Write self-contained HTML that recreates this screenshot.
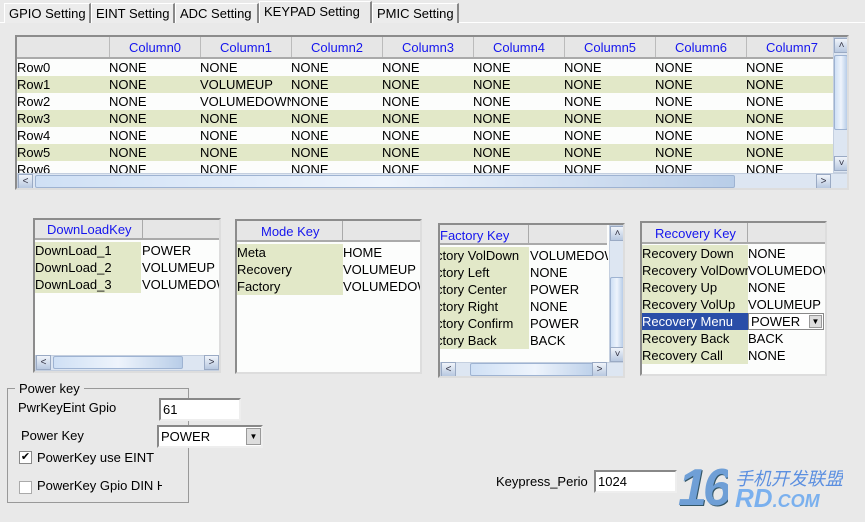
<!DOCTYPE html>
<html><head><meta charset="utf-8"><style>
*{margin:0;padding:0;box-sizing:border-box}
body{width:865px;height:522px;overflow:hidden;background:#e9e9e9;font-family:"Liberation Sans",Arial,sans-serif;font-size:13px;color:#000;position:relative}
.a{position:absolute;white-space:nowrap;overflow:hidden}
.tab{position:absolute;top:3px;height:20px;background:#ececec;border:1px solid #fff;border-right:2px solid #888;border-bottom:none;padding:2px 0 0 4px;font-size:13px;white-space:nowrap;overflow:hidden}
.box{position:absolute;background:#fcfdfc;border:2px solid #8c8c8c;border-right-color:#ddd;border-bottom-color:#ddd;overflow:hidden}
.hd{position:absolute;left:0;right:0;top:0;background:#e6e6e6;border-bottom:2px solid #aaa}
.blue{color:#1515ee}
.hl{background:#e2e8c8}
.sb{position:absolute;background:#dde6f2;border:1px solid #c4cfdf}
.btn{position:absolute;width:15px;height:15px;background:linear-gradient(#f0f4fa,#b8c8e0);border:1px solid #9aaac4;font-size:10px;text-align:center;line-height:13px;color:#334}
.thumb{position:absolute;background:linear-gradient(90deg,#cfe0f5,#eef4fc,#b8cde8);border:1px solid #9eb3d2;border-radius:2px}
.inp{position:absolute;background:#fff;border:2px solid #888;border-right-color:#eee;border-bottom-color:#eee;padding-left:2px;font-size:13px}
</style></head><body>
<div class="a" style="left:0;top:22px;width:865px;height:1px;background:#fff"></div>
<div class="tab" style="left:4px;width:87px">GPIO Setting</div>
<div class="tab" style="left:91px;width:84px">EINT Setting</div>
<div class="tab" style="left:175px;width:84px">ADC Setting</div>
<div class="tab" style="left:259px;top:1px;height:22px;width:113px;background:#e9e9e9">KEYPAD Setting</div>
<div class="tab" style="left:372px;width:87px">PMIC Setting</div>

<div class="box" style="left:15px;top:35px;width:834px;height:155px">
 <div class="hd" style="height:22px"></div>
 <div id="grid"></div>
 <div class="sb" style="left:816px;top:0;width:16px;height:136px"></div>
 <div class="btn" style="left:817px;top:1px">&#708;</div>
 <div class="thumb" style="left:817px;top:18px;width:14px;height:75px"></div>
 <div class="btn" style="left:817px;top:119px">&#709;</div>
 <div class="sb" style="left:0;top:136px;width:832px;height:17px"></div>
 <div class="btn" style="left:1px;top:137px">&lt;</div>
 <div class="thumb" style="left:18px;top:138px;width:700px;height:13px"></div>
 <div class="btn" style="left:799px;top:137px">&gt;</div>
</div>

<div class="box" style="left:33px;top:218px;width:188px;height:155px">
 <div class="hd" style="height:20px;width:108px;border-right:1px solid #aaa;right:auto"></div><div class="hd" style="height:20px;left:108px"></div>
 <div class="a blue" style="left:12px;top:2px">DownLoadKey</div>
 <div class="a hl" style="left:0;top:22px;width:106px;height:51px"></div>
 <div class="a" style="left:0;top:22px;line-height:17px">DownLoad_1<br>DownLoad_2<br>DownLoad_3</div>
 <div class="a" style="left:107px;top:22px;line-height:17px;width:79px">POWER<br>VOLUMEUP<br>VOLUMEDOWN</div>
 <div class="sb" style="left:0;top:135px;width:186px;height:16px"></div>
 <div class="btn" style="left:1px;top:135px">&lt;</div>
 <div class="thumb" style="left:18px;top:136px;width:130px;height:13px"></div>
 <div class="btn" style="left:169px;top:135px">&gt;</div>
</div>

<div class="box" style="left:235px;top:219px;width:187px;height:155px">
 <div class="hd" style="height:21px;width:106px;border-right:1px solid #aaa;right:auto"></div><div class="hd" style="height:21px;left:106px"></div>
 <div class="a blue" style="left:24px;top:3px">Mode Key</div>
 <div class="a hl" style="left:0;top:23px;width:106px;height:51px"></div>
 <div class="a" style="left:0;top:23px;line-height:17px">Meta<br>Recovery<br>Factory</div>
 <div class="a" style="left:106px;top:23px;line-height:17px;width:79px">HOME<br>VOLUMEUP<br>VOLUMEDOWN</div>
</div>

<div class="box" style="left:438px;top:223px;width:187px;height:155px">
 <div class="hd" style="height:20px;width:89px;border-right:1px solid #aaa;right:auto"></div><div class="hd" style="height:20px;left:89px;right:16px"></div>
 <div class="a blue" style="left:0;top:3px">Factory Key</div>
 <div class="a hl" style="left:0;top:22px;width:89px;height:102px"></div>
 <div class="a" style="left:-4px;top:22px;line-height:17px;width:93px">ctory VolDown<br>ctory Left<br>ctory Center<br>ctory Right<br>ctory Confirm<br>ctory Back</div>
 <div class="a" style="left:90px;top:22px;line-height:17px;width:78px">VOLUMEDOWN<br>NONE<br>POWER<br>NONE<br>POWER<br>BACK</div>
 <div class="sb" style="left:169px;top:0;width:16px;height:138px"></div>
 <div class="btn" style="left:170px;top:1px">&#708;</div>
 <div class="thumb" style="left:170px;top:52px;width:14px;height:80px"></div>
 <div class="btn" style="left:170px;top:122px">&#709;</div>
 <div class="sb" style="left:0;top:137px;width:185px;height:16px"></div>
 <div class="btn" style="left:1px;top:137px">&lt;</div>
 <div class="thumb" style="left:30px;top:138px;width:130px;height:13px"></div>
 <div class="btn" style="left:152px;top:137px">&gt;</div>
</div>

<div class="box" style="left:640px;top:221px;width:187px;height:155px">
 <div class="hd" style="height:21px;width:106px;border-right:1px solid #aaa;right:auto"></div><div class="hd" style="height:21px;left:106px"></div>
 <div class="a blue" style="left:13px;top:3px">Recovery Key</div>
 <div class="a hl" style="left:0;top:22px;width:106px;height:119px"></div>
 <div class="a" style="left:0;top:22px;line-height:17px;width:106px">Recovery Down<br>Recovery VolDown<br>Recovery Up<br>Recovery VolUp<br><span style="display:block;background:#2a4ea8;color:#fff">Recovery Menu</span>Recovery Back<br>Recovery Call</div>
 <div class="a" style="left:106px;top:22px;line-height:17px;width:79px">NONE<br>VOLUMEDOWN<br>NONE<br>VOLUMEUP<br><br>BACK<br>NONE</div>
 <div class="a" style="left:106px;top:90px;width:76px;height:17px;background:#fff;border:1px solid #888;padding-left:2px;line-height:15px">POWER</div>
 <div class="a" style="left:167px;top:92px;width:13px;height:13px;background:#ddd;border:1px solid #999;font-size:8px;text-align:center;line-height:11px">&#9660;</div>
</div>

<div class="a" style="left:7px;top:388px;width:182px;height:115px;border:1px solid #999;overflow:visible"></div>
<div class="a" style="left:15px;top:381px;background:#e9e9e9;padding:0 4px">Power key</div>
<div class="a" style="left:18px;top:400px">PwrKeyEint Gpio</div>
<div class="inp" style="left:159px;top:398px;width:82px;height:23px;line-height:19px">61</div>
<div class="a" style="left:21px;top:428px">Power Key</div>
<div class="inp" style="left:157px;top:425px;width:106px;height:23px;line-height:19px">POWER</div>
<div class="a" style="left:246px;top:428px;width:15px;height:17px;background:#ddd;border:1px solid #999;font-size:8px;text-align:center;line-height:15px">&#9660;</div>
<div class="a" style="left:19px;top:451px;width:13px;height:13px;background:#fff;border:1px solid #888;font-size:11px;line-height:11px;text-align:center">&#10004;</div>
<div class="a" style="left:37px;top:450px">PowerKey use EINT</div>
<div class="a" style="left:19px;top:481px;width:13px;height:13px;background:#fff;border:1px solid #aaa"></div>
<div class="a" style="left:37px;top:478px;width:125px">PowerKey Gpio DIN H</div>

<div class="a" style="left:496px;top:474px">Keypress_Perio</div>
<div class="inp" style="left:594px;top:470px;width:83px;height:23px;line-height:19px">1024</div>

<div class="a" style="left:678px;top:458px;font-size:52px;font-style:italic;font-weight:bold;color:#6f9fd6;letter-spacing:-4px;text-shadow:1px 1px 0 #356">16</div>
<div class="a" style="left:735px;top:465px;font-size:18px;font-style:italic;color:#5b8fe0;font-family:'Liberation Sans','Noto Sans CJK SC',sans-serif">手机开发联盟</div>
<div class="a" style="left:735px;top:483px;font-size:26px;font-style:italic;font-weight:bold;color:#7ab0ee">RD<span style="font-size:18px">.COM</span></div>

<script>
var g=document.getElementById('grid'),h='',cols=['Column0','Column1','Column2','Column3','Column4','Column5','Column6','Column7'];
for(var i=0;i<8;i++){var x=92+i*91;h+='<div class="a" style="left:'+x+'px;top:0;width:91px;height:20px;border-left:1px solid #bbb"></div><div class="a blue" style="left:'+(x+20)+'px;top:3px">'+cols[i]+'</div>';}
for(var r=0;r<7;r++){var y=22+r*17;if(r%2)h+='<div class="a hl" style="left:0;top:'+y+'px;width:816px;height:17px"></div>';
h+='<div class="a" style="left:0;top:'+(y+1)+'px">Row'+r+'</div>';
for(var c=0;c<8;c++){var t='NONE';if(c==1&&r==1)t='VOLUMEUP';if(c==1&&r==2)t='VOLUMEDOWN';h+='<div class="a" style="left:'+(92+c*91)+'px;top:'+(y+1)+'px;width:91px">'+t+'</div>';}}
g.innerHTML=h;
</script>
</body></html>
